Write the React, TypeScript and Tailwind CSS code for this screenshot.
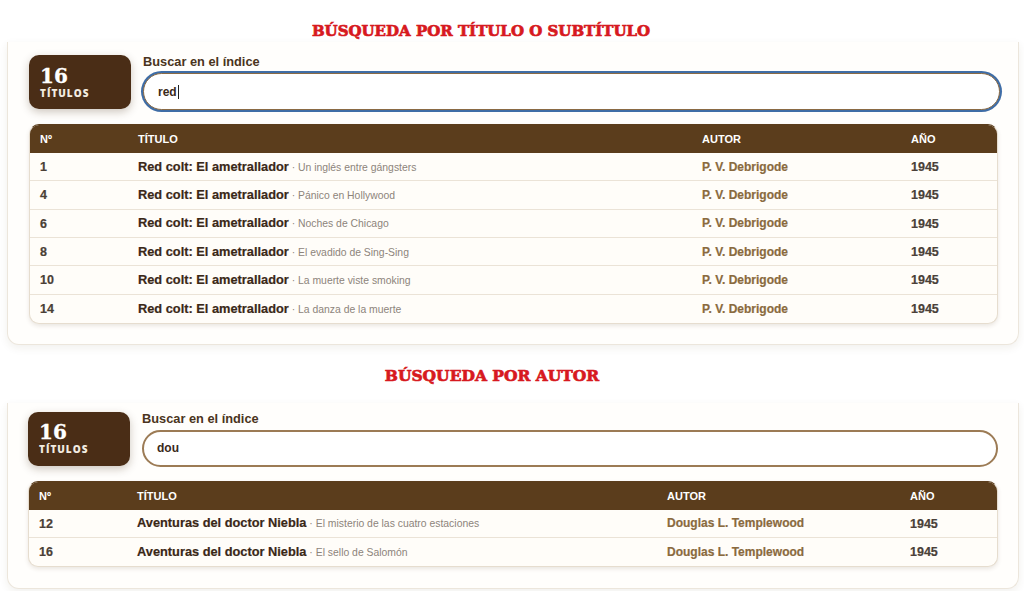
import React from "react";

type Row = { n: number; title: string; sub: string; author: string; year: number };

const rows1: Row[] = [
  { n: 1, title: "Red colt: El ametrallador", sub: "Un inglés entre gángsters", author: "P. V. Debrigode", year: 1945 },
  { n: 4, title: "Red colt: El ametrallador", sub: "Pánico en Hollywood", author: "P. V. Debrigode", year: 1945 },
  { n: 6, title: "Red colt: El ametrallador", sub: "Noches de Chicago", author: "P. V. Debrigode", year: 1945 },
  { n: 8, title: "Red colt: El ametrallador", sub: "El evadido de Sing-Sing", author: "P. V. Debrigode", year: 1945 },
  { n: 10, title: "Red colt: El ametrallador", sub: "La muerte viste smoking", author: "P. V. Debrigode", year: 1945 },
  { n: 14, title: "Red colt: El ametrallador", sub: "La danza de la muerte", author: "P. V. Debrigode", year: 1945 },
];

const rows2: Row[] = [
  { n: 12, title: "Aventuras del doctor Niebla", sub: "El misterio de las cuatro estaciones", author: "Douglas L. Templewood", year: 1945 },
  { n: 16, title: "Aventuras del doctor Niebla", sub: "El sello de Salomón", author: "Douglas L. Templewood", year: 1945 },
];

const sans = { fontFamily: '"Liberation Sans", Arial, sans-serif' };

function SectionTitle({ text, cls }: { text: string; cls: string }) {
  return (
    <div
      className={`flex justify-center pt-[22px] leading-[18px] font-black text-[#d71920] [-webkit-text-stroke:0.7px_#d71920] ${cls}`}
      style={{ fontFamily: '"DejaVu Serif", serif' }}
    >
      {text}
    </div>
  );
}

function Counter() {
  return (
    <div className="w-[102px] h-[54px] shrink-0 rounded-[10px] bg-[#4a2d16] shadow-[0_3px_8px_rgba(60,35,10,0.25)] flex flex-col justify-center px-[11px] text-white">
      <div
        className="text-[20px] leading-[22px] font-bold [-webkit-text-stroke:0.3px_#ffffff]"
        style={{ fontFamily: '"DejaVu Serif", serif' }}
      >
        16
      </div>
      <div
        className="text-[10px] leading-[13px] font-extrabold tracking-[0.1em] text-[#f3ebe0]"
        style={{ fontFamily: '"Open Sans", sans-serif' }}
      >
        TÍTULOS
      </div>
    </div>
  );
}

function Search({ value, focused }: { value: string; focused: boolean }) {
  return (
    <div className="flex-1 flex flex-col">
      <div className="h-[14px] leading-[14px] mb-[4px] text-[12.8px] font-bold text-[#4a3420]" style={sans}>
        Buscar en el índice
      </div>
      <div
        className={
          focused
            ? "h-[37px] rounded-full bg-white border border-[#8a6a44] shadow-[0_0_0_2px_#3f6da6] flex items-center px-[14px] mr-[-2px]"
            : "h-[37px] rounded-full bg-white border-2 border-[#9c7b55] flex items-center px-[13px]"
        }
      >
        <span className="text-[12px] font-bold text-[#3a2a1a]" style={sans}>
          {value}
        </span>
        {focused && <span className="inline-block w-px h-[14px] bg-[#222] ml-[1px]" />}
      </div>
    </div>
  );
}

function Table({ rows, cols, rowH }: { rows: Row[]; cols: string; rowH: string }) {
  return (
    <div
      className="mt-[14px] rounded-[10px] overflow-hidden border border-[#e6ddcf] border-t-[#5b3d1c] shadow-[0_2px_4px_rgba(80,60,30,0.12)] bg-[#fffdf9]"
      style={sans}
    >
      <div className={`grid ${cols} h-[28px] items-center bg-[#5b3d1c] text-white text-[11px] font-bold`}>
        <div className="pl-[10px]">Nº</div>
        <div className="pl-[10px]">TÍTULO</div>
        <div className="pl-[10px]">AUTOR</div>
        <div className="pl-[10px]">AÑO</div>
      </div>
      {rows.map((r, i) => (
        <div
          key={r.n}
          className={`grid ${cols} ${rowH} items-center leading-[16px] ${i < rows.length - 1 ? "border-b border-[#ebe3d7]" : ""}`}
        >
          <div className="pl-[10px] pt-px text-[12.5px] font-bold text-[#4a4036] [-webkit-text-stroke:0.2px_#4a4036]">{r.n}</div>
          <div className="pl-[10px] whitespace-nowrap">
            <span className="text-[12.8px] font-bold text-[#3a2817] [-webkit-text-stroke:0.2px_#3a2817]">{r.title}</span>
            <span className="text-[10.4px] text-[#8d847b]"> · {r.sub}</span>
          </div>
          <div className="pl-[10px] text-[12px] font-bold text-[#8a6a3e] [-webkit-text-stroke:0.2px_#8a6a3e]">{r.author}</div>
          <div className="pl-[10px] pt-px text-[12.5px] font-bold text-[#4a4038] [-webkit-text-stroke:0.2px_#4a4038]">{r.year}</div>
        </div>
      ))}
    </div>
  );
}

export default function App() {
  return (
    <div className="w-[1024px] h-[591px] bg-white overflow-hidden">
      <div className="h-[42px]">
        <SectionTitle text="BÚSQUEDA POR TÍTULO O SUBTÍTULO" cls="text-[15px] pr-[62px]" />
      </div>
      <div className="ml-[7px] mr-[5px] bg-[#fffefc] border border-t-0 border-[#ece6dc] rounded-b-[12px] shadow-[0_3px_8px_rgba(80,60,30,0.08)] pt-[13px] pl-[21px] pr-[20px] pb-[20px]">
        <div className="flex gap-[12px] h-[55px]">
          <Counter />
          <Search value="red" focused />
        </div>
        <Table rows={rows1} cols="grid-cols-[98px_564px_209px_1fr]" rowH="h-[28.33px]" />
      </div>
      <div className="h-[58px]">
        <SectionTitle text="BÚSQUEDA POR AUTOR" cls="text-[15.5px] pr-[40px]" />
      </div>
      <div className="ml-[7px] mr-[5px] bg-[#fffefc] border border-t-0 border-[#ece6dc] rounded-b-[12px] shadow-[0_3px_8px_rgba(80,60,30,0.08)] pt-[9px] pl-[20px] pr-[20px] pb-[21px]">
        <div className="flex gap-[12px] h-[55px]">
          <Counter />
          <Search value="dou" focused={false} />
        </div>
        <Table rows={rows2} cols="grid-cols-[98px_530px_243px_1fr]" rowH="h-[28px]" />
      </div>
    </div>
  );
}
